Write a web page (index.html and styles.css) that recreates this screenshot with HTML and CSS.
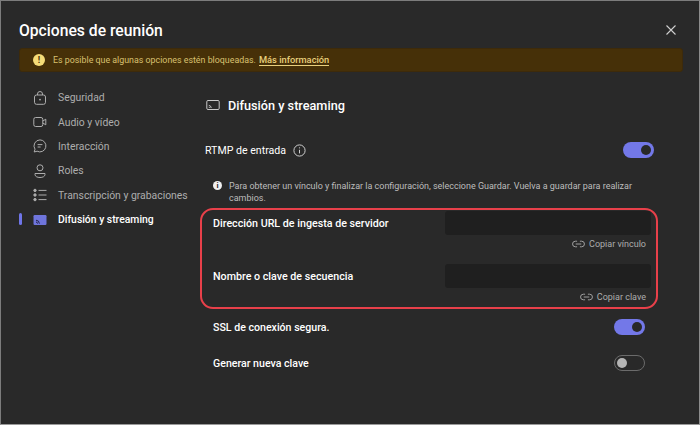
FILE: index.html
```html
<!DOCTYPE html>
<html lang="es">
<head>
  <meta charset="UTF-8" />
  <title>Opciones de reunión</title>
  <link rel="stylesheet" href="styles.css">
</head>
<body>
  <div class="dialog">
    <header class="dialog-header">
      <h1>Opciones de reunión</h1>
      <svg class="close" width="10" height="10" viewBox="0 0 10 10"><path d="M.5.5l9 9M9.5.5l-9 9" stroke="#d0d0d0" stroke-width="1.1" fill="none"/></svg>
    </header>

    <div class="banner">
      <span class="banner-icon">!</span>
      <span class="banner-text">Es posible que algunas opciones estén bloqueadas.</span>
      <a class="banner-link">Más información</a>
    </div>

    <div class="columns">
      <nav class="sidebar">
        <div class="nav-item">
          <svg width="14" height="14" viewBox="0 0 14 14" fill="none" stroke="#adadad"><rect x="1.5" y="4" width="11" height="9.3" rx="2"/><path d="M4.5 4V3a2.5 2.5 0 0 1 5 0v1"/><circle cx="7" cy="8.6" r=".9" fill="#adadad" stroke="none"/></svg>
          <span>Seguridad</span>
        </div>
        <div class="nav-item">
          <svg width="14" height="14" viewBox="0 0 14 14" fill="none" stroke="#adadad"><rect x=".8" y="2.5" width="9" height="9" rx="1.8"/><path d="M9.8 6l3-1.8v5.6l-3-1.8"/></svg>
          <span>Audio y vídeo</span>
        </div>
        <div class="nav-item">
          <svg width="14" height="14" viewBox="0 0 14 14" fill="none" stroke="#adadad"><path d="M7 .9a6 6 0 1 1-2.9 11.3L1.2 13l.8-2.8A6 6 0 0 1 7 .9z"/><path d="M4.6 5.6h4.8M4.6 8h3"/></svg>
          <span>Interacción</span>
        </div>
        <div class="nav-item">
          <svg width="14" height="14" viewBox="0 0 14 14" fill="none" stroke="#adadad"><circle cx="7" cy="3.8" r="3"/><path d="M2 9.5h10v1c0 2-2.4 3-5 3s-5-1-5-3z"/></svg>
          <span>Roles</span>
        </div>
        <div class="nav-item">
          <svg width="14" height="14" viewBox="0 0 14 14" fill="#adadad" stroke="#adadad"><circle cx="2" cy="2.4" r="1.2"/><circle cx="2" cy="7" r="1.2"/><circle cx="2" cy="11.6" r="1.2"/><path d="M5.5 2.4h8M5.5 7h8M5.5 11.6h8" fill="none"/></svg>
          <span>Transcripción y grabaciones</span>
        </div>
        <div class="nav-item active">
          <svg width="14" height="14" viewBox="0 0 14 14"><rect x=".5" y="2" width="13" height="10" rx="1.2" fill="#6f75dc"/><path d="M3 7.2a3.6 3.6 0 0 1 3.4 3.4M3 9a1.7 1.7 0 0 1 1.6 1.6" stroke="#23234a" fill="none"/></svg>
          <span>Difusión y streaming</span>
        </div>
      </nav>

      <main class="content">
        <div class="section-title">
          <svg width="14" height="14" viewBox="0 0 14 14" fill="none" stroke="#c8c8c8"><rect x=".8" y="2.5" width="12.4" height="9" rx="1.2"/><path d="M2.8 7.4a2.6 2.6 0 0 1 2.4 2.6M2.8 9.2a.9.9 0 0 1 .8.8"/></svg>
          <h2>Difusión y streaming</h2>
        </div>

        <div class="row rtmp-row">
          <div class="row-label">
            <span>RTMP de entrada</span>
            <svg width="13" height="13" viewBox="0 0 13 13" fill="none" stroke="#cfcfcf"><circle cx="6.5" cy="6.5" r="5.6"/><path d="M6.5 5.8v3.6"/><circle cx="6.5" cy="3.8" r=".6" fill="#cfcfcf" stroke="none"/></svg>
          </div>
          <span class="toggle on"></span>
        </div>

        <div class="note">
          <span class="note-icon">i</span>
          <p>Para obtener un vínculo y finalizar la configuración, seleccione Guardar. Vuelva a guardar para realizar cambios.</p>
        </div>

        <section class="highlight">
          <div class="field">
            <label>Dirección URL de ingesta de servidor</label>
            <div class="field-value">
              <div class="field-box"></div>
              <a class="copy">
                <svg width="13" height="8" viewBox="0 0 14 8" fill="none" stroke="#a8a8a8"><path d="M5.5 1H3.6a3 3 0 0 0 0 6h1.9M8.5 1h1.9a3 3 0 0 1 0 6H8.5M4 4h6"/></svg>
                <span>Copiar vínculo</span>
              </a>
            </div>
          </div>
          <div class="field">
            <label>Nombre o clave de secuencia</label>
            <div class="field-value">
              <div class="field-box"></div>
              <a class="copy">
                <svg width="13" height="8" viewBox="0 0 14 8" fill="none" stroke="#a8a8a8"><path d="M5.5 1H3.6a3 3 0 0 0 0 6h1.9M8.5 1h1.9a3 3 0 0 1 0 6H8.5M4 4h6"/></svg>
                <span>Copiar clave</span>
              </a>
            </div>
          </div>
        </section>

        <div class="row option-row">
          <span class="row-label strong">SSL de conexión segura.</span>
          <span class="toggle on"></span>
        </div>
        <div class="row option-row">
          <span class="row-label strong">Generar nueva clave</span>
          <span class="toggle"></span>
        </div>
      </main>
    </div>
  </div>
</body>
</html>
```

FILE: styles.css
```css
* {
  box-sizing: border-box;
}

body {
  margin: 0;
  font-family: Roboto, "Noto Sans", sans-serif;
  background: #292929;
  color: #d6d6d6;
}

h1, h2, p {
  margin: 0;
}

.dialog {
  width: 700px;
  height: 425px;
  overflow: hidden;
  background: #292929;
  border: 1px solid #7c7c7c;
  border-bottom-color: #9a9a9a;
  border-right-color: #8c8c8c;
  padding: 0 16px 0 18px;
}

.dialog-header {
  display: flex;
  justify-content: space-between;
  align-items: center;
  height: 47px;
  padding-top: 11px;
  padding-right: 7px;
}

.dialog-header h1 {
  font-size: 15.7px;
  font-weight: 500;
  color: #fff;
}

.banner {
  display: flex;
  align-items: center;
  gap: 3px;
  height: 24px;
  padding-left: 13px;
  background: #463008;
  border: 1px solid #3d2a0a;
  border-radius: 3px;
  font-size: 9.3px;
  color: #d8c070;
}

.banner-icon {
  width: 12px;
  height: 12px;
  margin-right: 5px;
  border-radius: 50%;
  background: #f5dc78;
  color: #463008;
  font-size: 9px;
  font-weight: 700;
  line-height: 12px;
  text-align: center;
}

.banner-text {
  font-size: 8.85px;
}

.banner-link {
  font-weight: 500;
  color: #e8cf7c;
  border-bottom: 1px solid #e8cf7c;
  line-height: 11px;
}

.columns {
  display: flex;
}

.sidebar {
  width: 186px;
  padding-top: 13.5px;
  flex-shrink: 0;
}

.nav-item {
  position: relative;
  display: flex;
  align-items: center;
  gap: 11px;
  height: 24.4px;
  padding-left: 14px;
  font-size: 10.4px;
  color: #adadad;
  white-space: nowrap;
}

.nav-item.active {
  font-weight: 500;
  color: #fff;
}

.nav-item.active::before {
  content: "";
  position: absolute;
  left: 0;
  top: 6px;
  width: 3px;
  height: 12px;
  border-radius: 2px;
  background: #6f75e8;
}

.content {
  flex: 1;
  min-width: 0;
}

.section-title {
  display: flex;
  align-items: center;
  gap: 8px;
  height: 24px;
  margin-top: 21px;
  padding-left: 1px;
}

.section-title h2 {
  font-size: 12.7px;
  font-weight: 500;
  color: #fff;
}

.row {
  display: flex;
  justify-content: space-between;
  align-items: center;
}

.rtmp-row {
  height: 20px;
  margin-top: 23px;
  padding-right: 29px;
}

.row-label {
  display: flex;
  align-items: center;
  gap: 7px;
  font-size: 10.6px;
  color: #fff;
}

.row-label.strong {
  font-weight: 500;
}

.toggle {
  position: relative;
  width: 31px;
  height: 16px;
  border: 1px solid #6b6b6b;
  border-radius: 8px;
}

.toggle::after {
  content: "";
  position: absolute;
  left: 2px;
  top: 2px;
  width: 10px;
  height: 10px;
  border-radius: 50%;
  background: #b5b5b5;
}

.toggle.on {
  border: none;
  background: #7378e8;
}

.toggle.on::after {
  left: 18px;
  top: 3px;
  background: #292929;
}

.note {
  display: flex;
  gap: 7px;
  margin-top: 20px;
  padding-left: 8px;
  padding-right: 32px;
  font-size: 8.97px;
  line-height: 12px;
  color: #bdbdbd;
}

.note-icon {
  flex-shrink: 0;
  width: 9px;
  height: 9px;
  margin-top: 1px;
  border-radius: 50%;
  background: #f0f0f0;
  color: #292929;
  font-size: 8px;
  font-weight: 700;
  line-height: 9px;
  text-align: center;
}

.highlight {
  width: 458px;
  height: 101px;
  margin-top: 4px;
  margin-left: -5px;
  padding: 1px 5px 0 11px;
  border: 2px solid #e8404a;
  border-radius: 13px;
}

.field {
  display: flex;
  justify-content: space-between;
  height: 53px;
}

.field label {
  padding-top: 6px;
  font-size: 10.7px;
  font-weight: 500;
  color: #fff;
}

.field-value {
  display: flex;
  flex-direction: column;
  width: 206px;
}

.field-box {
  height: 24px;
  background: #1f1f1f;
  border-radius: 3px;
}

.copy {
  display: flex;
  justify-content: flex-end;
  align-items: center;
  gap: 4px;
  height: 18px;
  padding-right: 5px;
  font-size: 9px;
  color: #adadad;
}

.option-row {
  height: 36px;
  width: 440px;
  padding-left: 8px;
}
```
